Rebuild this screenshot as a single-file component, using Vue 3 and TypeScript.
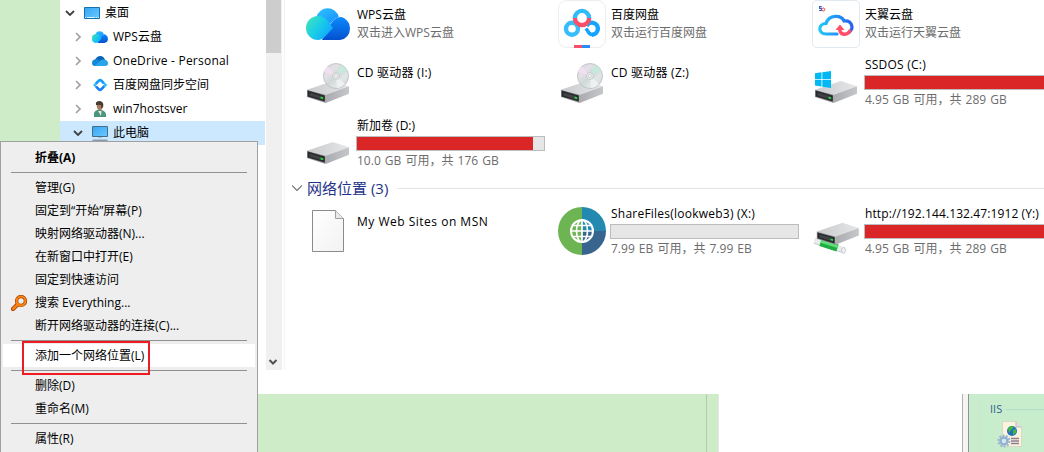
<script setup lang="ts">
interface TreeNode { label: string; icon: string; root?: boolean; open?: boolean; selected?: boolean; tracking?: string }
interface Tile { name: string; icon: string; sub?: string; used?: number; row?: string; tracking?: string }
interface MenuEntry { label?: string; bold?: boolean; active?: boolean; icon?: boolean }

const tree: TreeNode[] = [
  { label: '桌面', icon: 'desktop', root: true, open: true },
  { label: 'WPS云盘', icon: 'wps' },
  { label: 'OneDrive - Personal', icon: 'onedrive', tracking: 'loose' },
  { label: '百度网盘同步空间', icon: 'sync' },
  { label: 'win7hostsver', icon: 'user' },
  { label: '此电脑', icon: 'pc', open: true, selected: true },
]

const devices: Tile[] = [
  { name: 'WPS云盘', sub: '双击进入WPS云盘', icon: 'wps', row: 'first' },
  { name: '百度网盘', sub: '双击运行百度网盘', icon: 'baidu', row: 'first' },
  { name: '天翼云盘', sub: '双击运行天翼云盘', icon: 'tianyi', row: 'first' },
  { name: 'CD 驱动器 (I:)', icon: 'cd', tracking: 'loose' },
  { name: 'CD 驱动器 (Z:)', icon: 'cd', tracking: 'loose' },
  { name: 'SSDOS (C:)', icon: 'system', used: 98.3, sub: '4.95 GB 可用，共 289 GB', tracking: 'loose' },
  { name: '新加卷 (D:)', icon: 'drive', used: 94.3, sub: '10.0 GB 可用，共 176 GB' },
]

const network: Tile[] = [
  { name: 'My Web Sites on MSN', icon: 'file', tracking: 'wide' },
  { name: 'ShareFiles(lookweb3) (X:)', icon: 'globe', used: 0, sub: '7.99 EB 可用，共 7.99 EB', tracking: 'loose' },
  { name: 'http://192.144.132.47:1912 (Y:)', icon: 'netdrive', used: 98.3, sub: '4.95 GB 可用，共 289 GB', tracking: 'slight' },
]

const groups = [
  { id: 'devices', title: '', tiles: devices },
  { id: 'network', title: '网络位置 (3)', tiles: network },
]

const menu: MenuEntry[] = [
  { label: '折叠(A)', bold: true },
  {},
  { label: '管理(G)' },
  { label: '固定到“开始”屏幕(P)' },
  { label: '映射网络驱动器(N)...' },
  { label: '在新窗口中打开(E)' },
  { label: '固定到快速访问' },
  { label: '搜索 Everything...', icon: true },
  { label: '断开网络驱动器的连接(C)...' },
  {},
  { label: '添加一个网络位置(L)', active: true },
  {},
  { label: '删除(D)' },
  { label: '重命名(M)' },
  {},
  { label: '属性(R)' },
]
</script>

<template>
  <div class="screen">
    <svg class="defs" width="0" height="0">
      <defs>
        <linearGradient id="wTop" x1="0" y1="0" x2="1" y2="1"><stop offset="0" stop-color="#2fc3ff" /><stop offset="1" stop-color="#168cff" /></linearGradient>
        <linearGradient id="wLeft" x1="0" y1="0" x2="1" y2=".6"><stop offset="0" stop-color="#48e6b4" /><stop offset=".5" stop-color="#1ccfe4" /><stop offset="1" stop-color="#10a8ff" /></linearGradient>
        <linearGradient id="wRight" x1="0" y1="0" x2="0" y2="1"><stop offset="0" stop-color="#0a8bff" /><stop offset="1" stop-color="#0650cf" /></linearGradient>
        <linearGradient id="dTop" x1="0" y1="0" x2="1" y2="0"><stop offset="0" stop-color="#c9cacc" /><stop offset="1" stop-color="#e6e7e9" /></linearGradient>
        <linearGradient id="dSide" x1="0" y1="0" x2="1" y2="0"><stop offset="0" stop-color="#a9abae" /><stop offset="1" stop-color="#c6c7ca" /></linearGradient>
        <linearGradient id="disc" x1="0" y1="0" x2="1" y2="1"><stop offset="0" stop-color="#d3d6d8" /><stop offset=".3" stop-color="#e6e0e8" /><stop offset=".5" stop-color="#cfd9d7" /><stop offset=".7" stop-color="#e3e6e7" /><stop offset="1" stop-color="#c9cdd0" /></linearGradient>
        <linearGradient id="tBlue" x1="0" y1="0" x2="1" y2="0"><stop offset="0" stop-color="#20c8f8" /><stop offset="1" stop-color="#2864f0" /></linearGradient>
        <linearGradient id="paper" x1="0" y1="0" x2="1" y2="1"><stop offset="0" stop-color="#fff" /><stop offset="1" stop-color="#f2f2f2" /></linearGradient>
        <linearGradient id="screenBlue" x1="0" y1="0" x2="1" y2="1"><stop offset="0" stop-color="#35a6f2" /><stop offset="1" stop-color="#6cc8ff" /></linearGradient>
        <symbol id="i-wps" viewBox="0 0 48 48">
          <path d="M24 27L30 20Q35 15 40 18Q46 22 46 28.5Q45.500 38.500 36 40H18Z" fill="url(#wRight)" />
          <path d="M12.500 17A11.500 11.500 0 0 1 34.800 17Q31.500 18 29 21L25 25Q19 17 12.500 17Z" fill="url(#wTop)" />
          <path d="M14 16Q19 16 23 20L29 28L21.500 36Q18 40 14 40A12 12 0 0 1 14 16Z" fill="url(#wLeft)" />
        </symbol>
        <symbol id="drive-body" viewBox="0 0 48 48">
          <path d="M3 31.700L28.700 23L45 28.300L21.700 36.700Z" fill="url(#dTop)" />
          <path d="M21.700 36.700L45 28.300V35.700L21.700 45Z" fill="url(#dSide)" />
          <path d="M3 31.700L21.700 36.700V45L3 39Z" fill="#8e9093" />
          <path d="M3.700 32.600L20.800 37.500V43.600L3.700 38.400Z" fill="#292a2d" />
          <path d="M5.500 34.800L17 38V41L5.500 37.400Z" fill="#414245" />
          <path d="M16.600 38.600L19.200 39.300V41.300L16.600 40.500Z" fill="#28dc3c" />
        </symbol>
        <symbol id="i-drive" viewBox="0 0 48 48"><use href="#drive-body" width="48" height="48" /></symbol>
        <symbol id="i-cd" viewBox="0 0 48 48">
          <use href="#drive-body" width="48" height="48" />
          <circle cx="32" cy="18" r="12.500" fill="url(#disc)" stroke="#b7bbbd" stroke-width=".8" />
          <path d="M32 18L20 14Q21 10 24 8.500Z" fill="#f2dff0" /><path d="M32 18L37 7Q41 9 43 12Z" fill="#c5eadb" />
          <path d="M32 18L41 26Q37 30 33 30Z" fill="#eef1f2" />
          <circle cx="32" cy="18" r="3.500" fill="#e8eaeb" stroke="#c0c4c6" stroke-width=".8" /><circle cx="32" cy="18" r="1.500" fill="#fff" stroke="#aaa" stroke-width=".5" />
        </symbol>
        <symbol id="i-system" viewBox="0 0 48 48">
          <use href="#drive-body" width="48" height="48" />
          <path d="M3 15.300L9.500 14.300V20.900H3ZM10.300 14.200L19 13V20.900H10.300ZM3 21.700H9.500V28.600L3 27.600ZM10.300 21.700H19V30L10.300 28.700Z" fill="#00b8f4" />
        </symbol>
        <symbol id="i-netdrive" viewBox="0 0 48 48">
          <path d="M2.500 34L32 43.500" stroke="#c9cdcf" stroke-width="6" />
          <path d="M2.500 33.600L32 43" stroke="#e9ecec" stroke-width="4.500" />
          <path d="M8.500 35.500L25.500 41" stroke="#1faf41" stroke-width="7.500" />
          <path d="M9 34.200L26 39.600" stroke="#61dd79" stroke-width="3" />
          <ellipse cx="31.500" cy="43.400" rx="2" ry="2.900" fill="#eef0f1" stroke="#bfc4c6" stroke-width=".8" />
          <g transform="translate(1.800 -7.200)"><use href="#drive-body" width="48" height="48" /></g>
        </symbol>
        <symbol id="i-baidu" viewBox="0 0 48 48">
          <rect x=".5" y=".5" width="47" height="47" rx="8" fill="#fff" stroke="#ededed" />
          <g fill="none" stroke-width="4.400"><circle cx="14" cy="28.700" r="6" stroke="#38bdfb" />
            <path d="M28.500 26A6 6 0 1 1 34 34.700" stroke="#14a3ff" />
            <path d="M28 28.500L31 33Q32.500 34.700 35 34.700" stroke="#14a3ff" stroke-width="3.500" />
            <path d="M16.900 18A7.100 7.100 0 0 1 31.100 18" stroke="#32baf9" />
            <path d="M16.900 18A7.100 7.100 0 0 0 31.100 18" stroke="#fa4f68" />
          </g>
          <path d="M16 45H24V48H16Z" fill="#fa4f68" /><path d="M24 45H32V48H24Z" fill="#278bfa" />
        </symbol>
        <symbol id="i-tianyi" viewBox="0 0 48 48">
          <rect x=".5" y=".5" width="47" height="47" rx="4" fill="#fff" stroke="#e3e9f0" />
          <path d="M25 34H14C5.500 34 6 23.500 14 23.500C17 14.500 29 14.500 32 21C40 20 42 28 37.500 32" fill="none" stroke="url(#tBlue)" stroke-width="3.200" stroke-linecap="round" />
          <path d="M28 28V31Q29 34.500 33 34.300Q36 34 37.800 31" fill="none" stroke="#ff4f69" stroke-width="3.400" stroke-linecap="round" />
          <path d="M23.500 30L28 24.500L32.500 30Z" fill="#ff4f69" />
          <path d="M9.800 6.500H7.600V8.300H9.300V10.500H7" fill="none" stroke="#2868b7" stroke-width="1.200" /><circle cx="11.300" cy="9.500" r="1.500" fill="none" stroke="#e94054" />
        </symbol>
        <symbol id="i-file" viewBox="0 0 48 48">
          <path d="M8.500 3.500H31.500L39.500 11.500V44.500H8.500Z" fill="url(#paper)" stroke="#8b8b8b" /><path d="M31.500 3.500V11.500H39.500" fill="#e8e8e8" stroke="#a0a0a0" />
        </symbol>
        <symbol id="i-globe" viewBox="0 0 48 48">
          <path d="M24 0A24 24 0 0 0 24 48Z" fill="#6db453" /><path d="M24 0A24 24 0 0 1 48 24H24Z" fill="#2389b0" /><path d="M48 24A24 24 0 0 1 24 48V24Z" fill="#38658e" />
          <g fill="none" stroke="#fff" stroke-width="1.700"><circle cx="24" cy="24" r="11" stroke-width="2" /><ellipse cx="24" cy="24" rx="5.500" ry="11" /><path d="M24 13V35M13 24H35M15 18.500H33M15 29.500H33" /></g>
        </symbol>
        <symbol id="s-desktop" viewBox="0 0 16 16"><path d="M.5 2.500H15.500V13.500H.5Z" fill="url(#screenBlue)" stroke="#1271b5" /><path d="M1 12.500H15" stroke="#d8f2ff" stroke-dasharray="1 1 8 1" /></symbol>
        <symbol id="s-wps" viewBox="3 4 43 40"><use href="#i-wps" width="48" height="48" /></symbol>
        <symbol id="s-onedrive" viewBox="0 0 16 16"><path d="M3 7Q5 2.500 9 3Q12 3.500 13 7L10 10L1 9Z" fill="#0865b8" /><path d="M2.500 6.500Q5 5 8 8L10 13H3Q0 13 0 10Q0 7 2.500 6.500Z" fill="#1488d8" /><path d="M8 8Q10 6 13 6.800Q16 7.500 16 10.500Q16 13 13 13H3Z" fill="#28a4e8" /></symbol>
        <symbol id="s-sync" viewBox="0 0 16 16"><g fill="none" stroke-width="2.600"><path d="M3.500 7L7 3.500Q8.200 2.600 9.400 3.700L12 6.500" stroke="#149cfa" /><path d="M12.500 9L9.200 12.300Q8 13.400 6.800 12.300L4 9.500" stroke="#1980f6" /></g><path d="M1 8L4 5V11ZM15.500 8L12 5V11Z" fill="#38bdf9" /></symbol>
        <symbol id="s-user" viewBox="0 0 16 16"><path d="M2 16V12Q3 9 7 8.500Q13 9 14 13V16Z" fill="#4b957a" /><path d="M4 2Q6-.5 10 1Q12 2 11 6L8.500 10L5.500 8Z" fill="#a97a5d" /><path d="M4 4Q3 0 8 0Q12 1 11 6L9.500 8L9 4Z" fill="#493c33" /><path d="M6 10L9 15L9.500 10Z" fill="#dcebe4" /></symbol>
        <symbol id="s-pc" viewBox="0 0 16 16"><path d="M.5 1.500H15.500V11.500H.5Z" fill="url(#screenBlue)" stroke="#426f8d" /><path d="M6 12H10V13H6Z" fill="#b2bcc7" /><path d="M1 14.500H15L16 16H0Z" fill="#8999ae" /></symbol>
      </defs>
    </svg>

    <main class="explorer">
      <div class="backdrop"></div>
      <nav class="tree">
        <div v-for="node in tree" :key="node.label" class="node" :class="{ root: node.root, selected: node.selected }">
          <svg class="arrow" viewBox="0 0 10 10"><path v-if="node.open" d="M1 3L5 7L9 3" fill="none" stroke="#404040" stroke-width="1.800" /><path v-else d="M3 1L7 5L3 9" fill="none" stroke="#a0a0a0" stroke-width="1.700" /></svg>
          <svg class="small"><use :href="'#s-' + node.icon" width="16" height="16" /></svg>
          <span :class="node.tracking">{{ node.label }}</span>
        </div>
      </nav>
      <div class="scrollbar"><div class="thumb"></div><svg viewBox="0 0 10 10"><path d="M1.500 3L5 6.500L8.500 3" fill="none" stroke="#505050" stroke-width="2" /></svg></div>
      <section class="content">
        <div v-for="group in groups" :key="group.id" class="group">
          <header v-if="group.title"><svg viewBox="0 0 10 10"><path d="M0 2.500L5 7.500L10 2.500" fill="none" stroke="#727272" stroke-width="1.100" /></svg><h2>{{ group.title }}</h2><i></i></header>
          <div class="tiles">
            <article v-for="tile in group.tiles" :key="tile.name" class="tile" :class="[tile.row, { plain: !tile.sub }]">
              <svg class="large"><use :href="'#i-' + tile.icon" width="48" height="48" /></svg>
              <div class="info">
                <div class="name" :class="tile.tracking">{{ tile.name }}</div>
                <div v-if="tile.used !== undefined" class="bar"><div :style="{ width: tile.used + '%' }"></div></div>
                <div v-if="tile.sub" class="sub">{{ tile.sub }}</div>
              </div>
            </article>
          </div>
        </div>
      </section>
    </main>

    <footer class="behind">
      <div class="green"></div><div class="edge"></div><div class="blank"></div><div class="gutter"></div>
      <div class="iis">
        <div class="iis-title"><span>IIS</span><i></i></div>
        <svg class="iis-icon" viewBox="0 0 26 28">
          <path d="M5.500 1.500H19L24.500 7V26.500H5.500Z" fill="#fbf4dc" stroke="#dbd7c4" /><path d="M19 1.500V7H24.500" fill="#dedede" stroke="#bcbcbc" />
          <circle cx="15" cy="11" r="5" fill="#246fc0" /><path d="M11 8Q14 5 17 7L14 10L12 13ZM16 10L19 9V13L16 15Z" fill="#43b83f" />
          <path d="M14 18.500H22M14 21H22M14 23.500H22" stroke="#8d7e91" stroke-width="1.300" />
          <circle cx="7" cy="21" r="5.500" fill="none" stroke="#9bb8d3" stroke-width="2" stroke-dasharray="2 1.400" /><circle cx="7" cy="21" r="3.500" fill="#d7e8ed" stroke="#92b1cf" stroke-width="2.500" />
        </svg>
      </div>
    </footer>

    <aside class="menu">
      <template v-for="(entry, index) in menu" :key="index">
        <div v-if="entry.label" class="entry" :class="{ bold: entry.bold, active: entry.active }">
          <svg v-if="entry.icon" class="search" viewBox="0 0 16 16"><path d="M7 9L2 14" stroke="#a94405" stroke-width="4.200" stroke-linecap="round" /><circle cx="10" cy="6" r="4.400" fill="#ececec" stroke="#a94405" stroke-width="3.400" /><path d="M7 9L2.200 13.800" stroke="#ff850e" stroke-width="2.400" stroke-linecap="round" /><circle cx="10" cy="6" r="4.400" fill="none" stroke="#ff850e" stroke-width="2" /></svg>
          <span>{{ entry.label }}</span>
        </div>
        <div v-else class="separator"></div>
      </template>
    </aside>
    <div class="marker"></div>
  </div>
</template>

<style scoped>
.screen { position: relative; width: 1044px; height: 452px; overflow: hidden; background: #fff; color: #000; font: 12px/18px "Open Sans", "Noto Sans CJK SC", sans-serif; white-space: nowrap; }
.defs { position: absolute; }
svg { flex: none; }
.explorer { display: flex; height: 394px; }
.backdrop { width: 60px; background: #cdecc7; }
.tree { width: 206px; height: 369px; padding-top: 1px; }
.node { display: flex; align-items: center; width: 205px; height: 24px; padding-left: 13px; box-sizing: border-box; }
.node.root { padding-left: 5px; }
.node.selected { background: #cce8ff; }
.arrow { width: 10px; height: 10px; margin-right: 9px; }
.small { width: 16px; height: 16px; margin-right: 5px; }
.scrollbar { display: flex; flex-direction: column; justify-content: space-between; width: 16px; height: 370px; background: #f0f0f0; }
.thumb { width: 15px; height: 53px; background: #cdcdcd; }
.scrollbar svg { width: 10px; height: 10px; margin: 0 0 3px 2px; }
.content { width: 759px; height: 370px; margin-left: 2px; border-left: 1px solid #f3f3f3; overflow: hidden; }
.tiles { display: grid; grid-template-columns: repeat(3, 254px); padding-left: 19px; }
.tile { display: flex; height: 61px; box-sizing: border-box; padding-top: 4px; }
.tile.first { height: 54px; padding-top: 0; }
.large { width: 48px; height: 48px; }
.info { width: 189px; margin: -2px 0 0 4px; }
.name, .sub { padding-left: 1px; height: 18px; }
.name { margin-bottom: 1px; }
.slight { letter-spacing: .1px; }
.loose { letter-spacing: .23px; }
.wide { letter-spacing: .5px; }
.sub { padding-top: 1px; color: #6d6d6d; word-spacing: 1px; }
.plain .info { margin-top: 6px; }
.first .info { margin-top: 6px; }
.first .name { margin-bottom: 0; }
.first .sub { padding-top: 0; }
.bar { height: 15px; box-sizing: border-box; border: 1px solid #bcbcbc; background: #e6e6e6; }
.bar div { height: 13px; background: #da2626; }
header { display: flex; align-items: center; height: 24px; padding: 0 0 3px 7px; }
header svg { width: 10px; height: 10px; }
h2 { margin: -1px 7px 0 5px; color: #1e3287; font-size: 15px; line-height: 24px; font-weight: 400; width: 83px; }
header i { flex: 1; height: 1px; background: #e2e2e2; }
.behind { display: flex; height: 58px; }
.green { width: 706px; background: #cdecc7; }
.edge { width: 11px; border-left: 1px solid #b4c9b0; border-right: 1px solid #e4e7e4; background: #cdecc7; }
.blank { width: 243px; }
.gutter { width: 5px; border-left: 1px solid #b0b0b0; border-right: 1px solid #929292; background: #f4f4f4; }
.iis { flex: 1; padding: 6px 0 0 10px; background: linear-gradient(90deg, #c7edcc 10px, #d0e4d2 10px, #d0e4d2 11px, #c7edcc 11px); }
.iis-title { display: flex; align-items: center; padding-left: 11px; color: #3b5c94; font-size: 11px; }
.iis-title i { flex: 1; height: 1px; margin-left: 4px; background: #b4dbcb; }
.iis-icon { display: block; width: 26px; height: 28px; margin: 2px 0 0 18px; }
.menu { position: absolute; left: 0; top: 141px; width: 258px; height: 320px; box-sizing: border-box; padding: 4px 2px; border: 1px solid #a0a0a0; background: #eee; }
.entry { display: flex; align-items: center; height: 23px; padding-left: 32px; }
.entry.bold { font-weight: 700; }
.entry.active { background: #fff; }
.search { width: 16px; height: 16px; margin: 0 8px 0 -24px; }
.separator { height: 1px; margin: 3px 8px; background: #919191; }
.marker { position: absolute; left: 22px; top: 341px; width: 128px; height: 34px; box-sizing: border-box; border: 2px solid #ed1c24; }
</style>
